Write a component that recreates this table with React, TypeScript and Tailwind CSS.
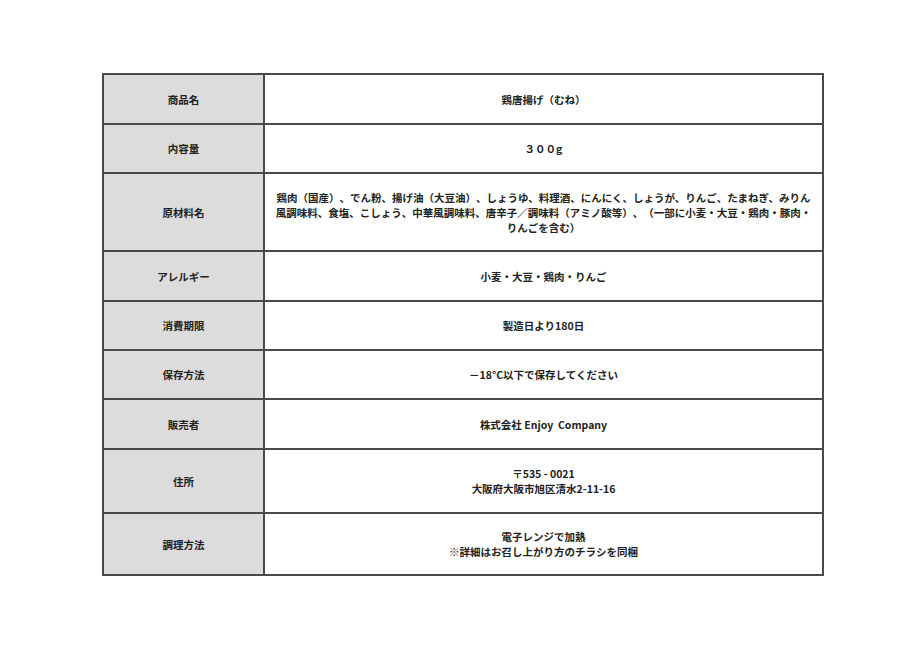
const rows: { label: string; value: React.ReactNode; h: string }[] = [
  { label: '商品名', value: '鶏唐揚げ（むね）', h: 'h-[50px]' },
  { label: '内容量', value: '３００g', h: 'h-[49px]' },
  {
    label: '原材料名',
    value: (
      <>
        鶏肉（国産）、でん粉、揚げ油（大豆油）、しょうゆ、料理酒、にんにく、しょうが、りんご、たまねぎ、みりん
        <br />
        風調味料、食塩、こしょう、中華風調味料、唐辛子／調味料（アミノ酸等）、（一部に小麦・大豆・鶏肉・豚肉・
        <br />
        りんごを含む）
      </>
    ),
    h: 'h-[78px]',
  },
  { label: 'アレルギー', value: '小麦・大豆・鶏肉・りんご', h: 'h-[50px]' },
  { label: '消費期限', value: '製造日より180日', h: 'h-[49px]' },
  { label: '保存方法', value: '－18°C以下で保存してください', h: 'h-[49px]' },
  { label: '販売者', value: '株式会社 Enjoy  Company', h: 'h-[50px]' },
  {
    label: '住所',
    value: (
      <>
        〒535 - 0021
        <br />
        大阪府大阪市旭区清水2-11-16
      </>
    ),
    h: 'h-[64px]',
  },
  {
    label: '調理方法',
    value: (
      <>
        電子レンジで加熱
        <br />
        ※詳細はお召し上がり方のチラシを同梱
      </>
    ),
    h: 'h-[62px]',
  },
];

export default function App() {
  return (
    <div
      className="w-[924px] h-[660px] bg-white pt-[73px] text-[#222] font-bold text-[10.5px] leading-[15px] [text-spacing-trim:space-all]"
      style={{ fontFamily: '"Noto Sans CJK JP", "Noto Sans", sans-serif' }}
    >
      <div className="ml-[102px] w-[722px] border-2 border-[#4a4a4a] border-b-0">
        {rows.map((r) => (
          <div key={r.label} className={`grid grid-cols-[161px_1fr] border-b-2 border-[#4a4a4a] ${r.h}`}>
            <div className="flex items-center justify-center bg-[#dcdcdc] border-r-2 border-[#4a4a4a]">
              {r.label}
            </div>
            <div className="flex items-center justify-center text-center px-2 whitespace-pre">
              <div>{r.value}</div>
            </div>
          </div>
        ))}
      </div>
    </div>
  );
}
